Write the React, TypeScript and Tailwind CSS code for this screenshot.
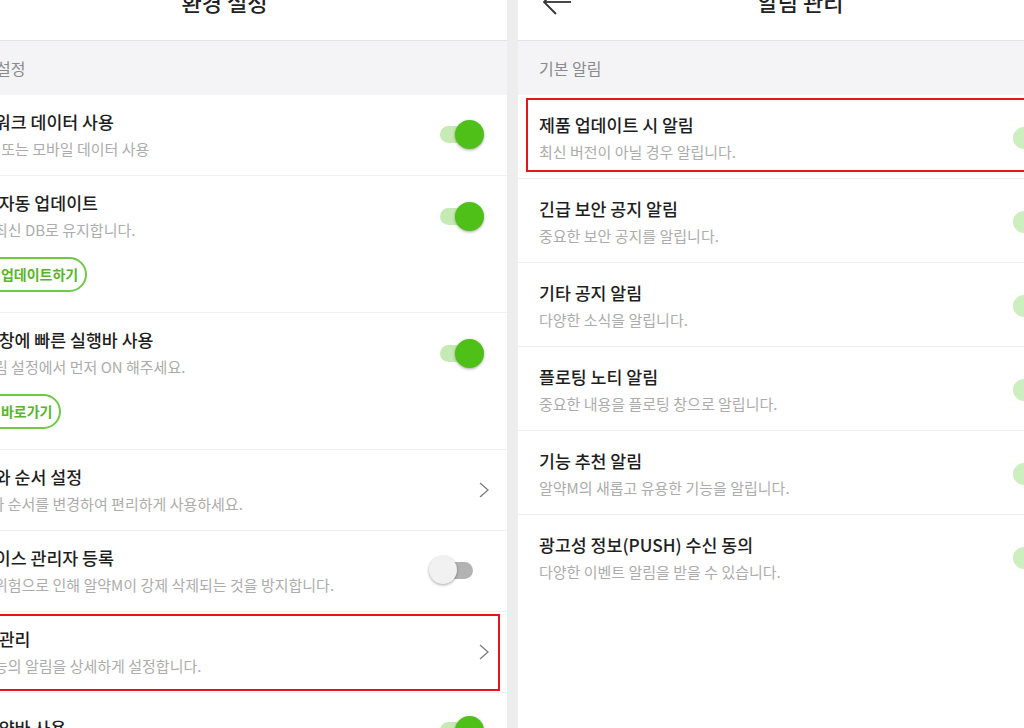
import React from "react";

const FONT = { fontFamily: '"Noto Sans CJK KR", "Noto Sans", sans-serif' };

function Toggle({ on }: { on: boolean }) {
  return (
    <div className="relative w-[56px] h-[30px] shrink-0">
      <div
        className={
          on
            ? "absolute left-[11px] top-[6px] w-[35px] h-[17px] rounded-full bg-[#c6eab3]"
            : "absolute left-[14px] top-[6px] w-[30px] h-[17px] rounded-full bg-[#b3b3b3]"
        }
      />
      <div
        className={
          on
            ? "absolute left-[26px] top-0 w-[29px] h-[29px] rounded-full bg-[#4fc017] shadow-[0_1px_3px_rgba(0,0,0,0.35)]"
            : "absolute left-0 top-0 w-[28px] h-[28px] rounded-full bg-[#f1f1f1] shadow-[0_1px_3px_rgba(0,0,0,0.35)]"
        }
      />
    </div>
  );
}

function BigToggle() {
  return (
    <div className="relative w-[56px] h-[30px] shrink-0">
      <div className="absolute left-0 top-[4px] w-[46px] h-[22px] rounded-full bg-[#cdeebe]" />
      <div className="absolute left-[26px] top-0 w-[30px] h-[30px] rounded-full bg-[#4fc017] shadow-[0_1px_3px_rgba(0,0,0,0.35)]" />
    </div>
  );
}

function Chevron() {
  return (
    <svg width="10" height="16" viewBox="0 0 10 16" className="shrink-0">
      <polyline points="1,1 9,8 1,15" fill="none" stroke="#7d7d7d" strokeWidth="1.3" />
    </svg>
  );
}

function PillButton({ label }: { label: string }) {
  return (
    <div className="mt-[17px] inline-flex h-[35px] items-center rounded-full border-2 border-[#6fc846] px-[7px] text-[14px] font-bold text-[#58b52a]">
      {label}
    </div>
  );
}

type LeftRow = {
  title: string;
  sub: string;
  right: "on" | "off" | "chev";
  button?: string;
  boxed?: boolean;
  low?: boolean;
};

const leftRows: LeftRow[] = [
  { title: "네트워크 데이터 사용", sub: "Wi-Fi 또는 모바일 데이터 사용", right: "on" },
  { title: "엔진 자동 업데이트", sub: "항상 최신 DB로 유지합니다.", right: "on", button: "지금 업데이트하기" },
  { title: "알림 창에 빠른 실행바 사용", sub: "폰 알림 설정에서 먼저 ON 해주세요.", right: "on", button: "설정 바로가기" },
  { title: "메뉴와 순서 설정", sub: "메뉴와 순서를 변경하여 편리하게 사용하세요.", right: "chev" },
  { title: "디바이스 관리자 등록", sub: "삭제 위험으로 인해 알약M이 강제 삭제되는 것을 방지합니다.", right: "off" },
  { title: "알림 관리", sub: "각 기능의 알림을 상세하게 설정합니다.", right: "chev", boxed: true },
  { title: "홈 알약바 사용", sub: "알약바를 사용합니다.", right: "on", low: true },
];

const rightRows = [
  { title: "제품 업데이트 시 알림", sub: "최신 버전이 아닐 경우 알립니다.", boxed: true },
  { title: "긴급 보안 공지 알림", sub: "중요한 보안 공지를 알립니다." },
  { title: "기타 공지 알림", sub: "다양한 소식을 알립니다." },
  { title: "플로팅 노티 알림", sub: "중요한 내용을 플로팅 창으로 알립니다." },
  { title: "기능 추천 알림", sub: "알약M의 새롭고 유용한 기능을 알립니다." },
  { title: "광고성 정보(PUSH) 수신 동의", sub: "다양한 이벤트 알림을 받을 수 있습니다." },
];

function LeftPanel() {
  return (
    <div className="w-[507px] shrink-0 overflow-hidden bg-white">
      <div className="w-[565px] -ml-[58px] -mt-[37px]">
        <div className="h-[78px] flex items-center justify-center border-b border-[#e4e4e6] text-[22px] font-medium text-[#222]">
          환경 설정
        </div>
        <div className="h-[54px] flex items-center bg-[#f4f4f6] px-[21px] text-[16px] text-[#8a8a8a]">
          기본 설정
        </div>
        {leftRows.map((r, i) => (
          <div
            key={i}
            className={
              "relative flex border-b border-[#f0f0f0] pl-[21px] pr-[18px] " +
              (r.button ? "h-[137px] items-start" : r.low ? "h-[81px] items-start" : "h-[81px] items-center")
            }
          >
            <div
              className={
                "flex-1 flex flex-col " + (r.button ? "pt-[16px]" : r.low ? "pt-[24px]" : "")
              }
            >
              <div className="text-[17.3px] leading-[22px] font-medium text-[#1e1e1e]">{r.title}</div>
              <div className="mt-[6px] text-[15px] leading-[20px] text-[#acacac]">{r.sub}</div>
              {r.button && (
                <div>
                  <PillButton label={r.button} />
                </div>
              )}
            </div>
            <div className={r.button ? "mt-[26px] mr-[4px]" : r.low ? "mt-[23px] mr-[4px]" : r.right === "chev" ? "" : "mr-[4px]"}>
              {r.right === "chev" ? (
                <Chevron />
              ) : (
                <Toggle on={r.right === "on"} />
              )}
            </div>
            {r.boxed && (
              <div className="absolute left-[10px] right-[7px] top-[2px] bottom-[1px] border-2 border-[#e8141b]" />
            )}
          </div>
        ))}
      </div>
    </div>
  );
}

function RightPanel() {
  return (
    <div className="flex-1 overflow-hidden bg-white">
      <div className="w-[565px] -mt-[37px]">
        <div className="h-[78px] flex items-center border-b border-[#e4e4e6]">
          <div className="w-[80px] pl-[24px] flex items-center">
            <svg width="30" height="26" viewBox="0 0 30 26">
              <polyline points="14,1 2,13 14,25" fill="none" stroke="#333" strokeWidth="1.8" />
              <line x1="2" y1="13" x2="29" y2="13" stroke="#333" strokeWidth="1.8" />
            </svg>
          </div>
          <div className="flex-1 text-center text-[22px] font-medium text-[#222]">알림 관리</div>
          <div className="w-[80px]" />
        </div>
        <div className="h-[54px] flex items-center bg-[#f4f4f6] px-[21px] text-[16px] text-[#8a8a8a]">
          기본 알림
        </div>
        {rightRows.map((r, i) => (
          <div
            key={i}
            className={
              "relative h-[84px] flex items-center pl-[21px] pr-[14px] " +
              (i < rightRows.length - 1 ? "border-b border-[#f0f0f0]" : "")
            }
          >
            <div className="flex-1 flex flex-col pt-[2px]">
              <div className="text-[17.3px] leading-[22px] font-medium text-[#1e1e1e]">{r.title}</div>
              <div className="mt-[6px] text-[15px] leading-[20px] text-[#acacac]">{r.sub}</div>
            </div>
            <div className="mt-[2px]">
              <BigToggle />
            </div>
            {r.boxed && (
              <div className="absolute left-[8px] right-[8px] top-[3px] bottom-[6px] border-2 border-[#e8141b]" />
            )}
          </div>
        ))}
      </div>
    </div>
  );
}

export default function App() {
  return (
    <div style={FONT} className="w-[1024px] h-[728px] overflow-hidden flex gap-[11px] bg-[#ededed]">
      <LeftPanel />
      <RightPanel />
    </div>
  );
}
